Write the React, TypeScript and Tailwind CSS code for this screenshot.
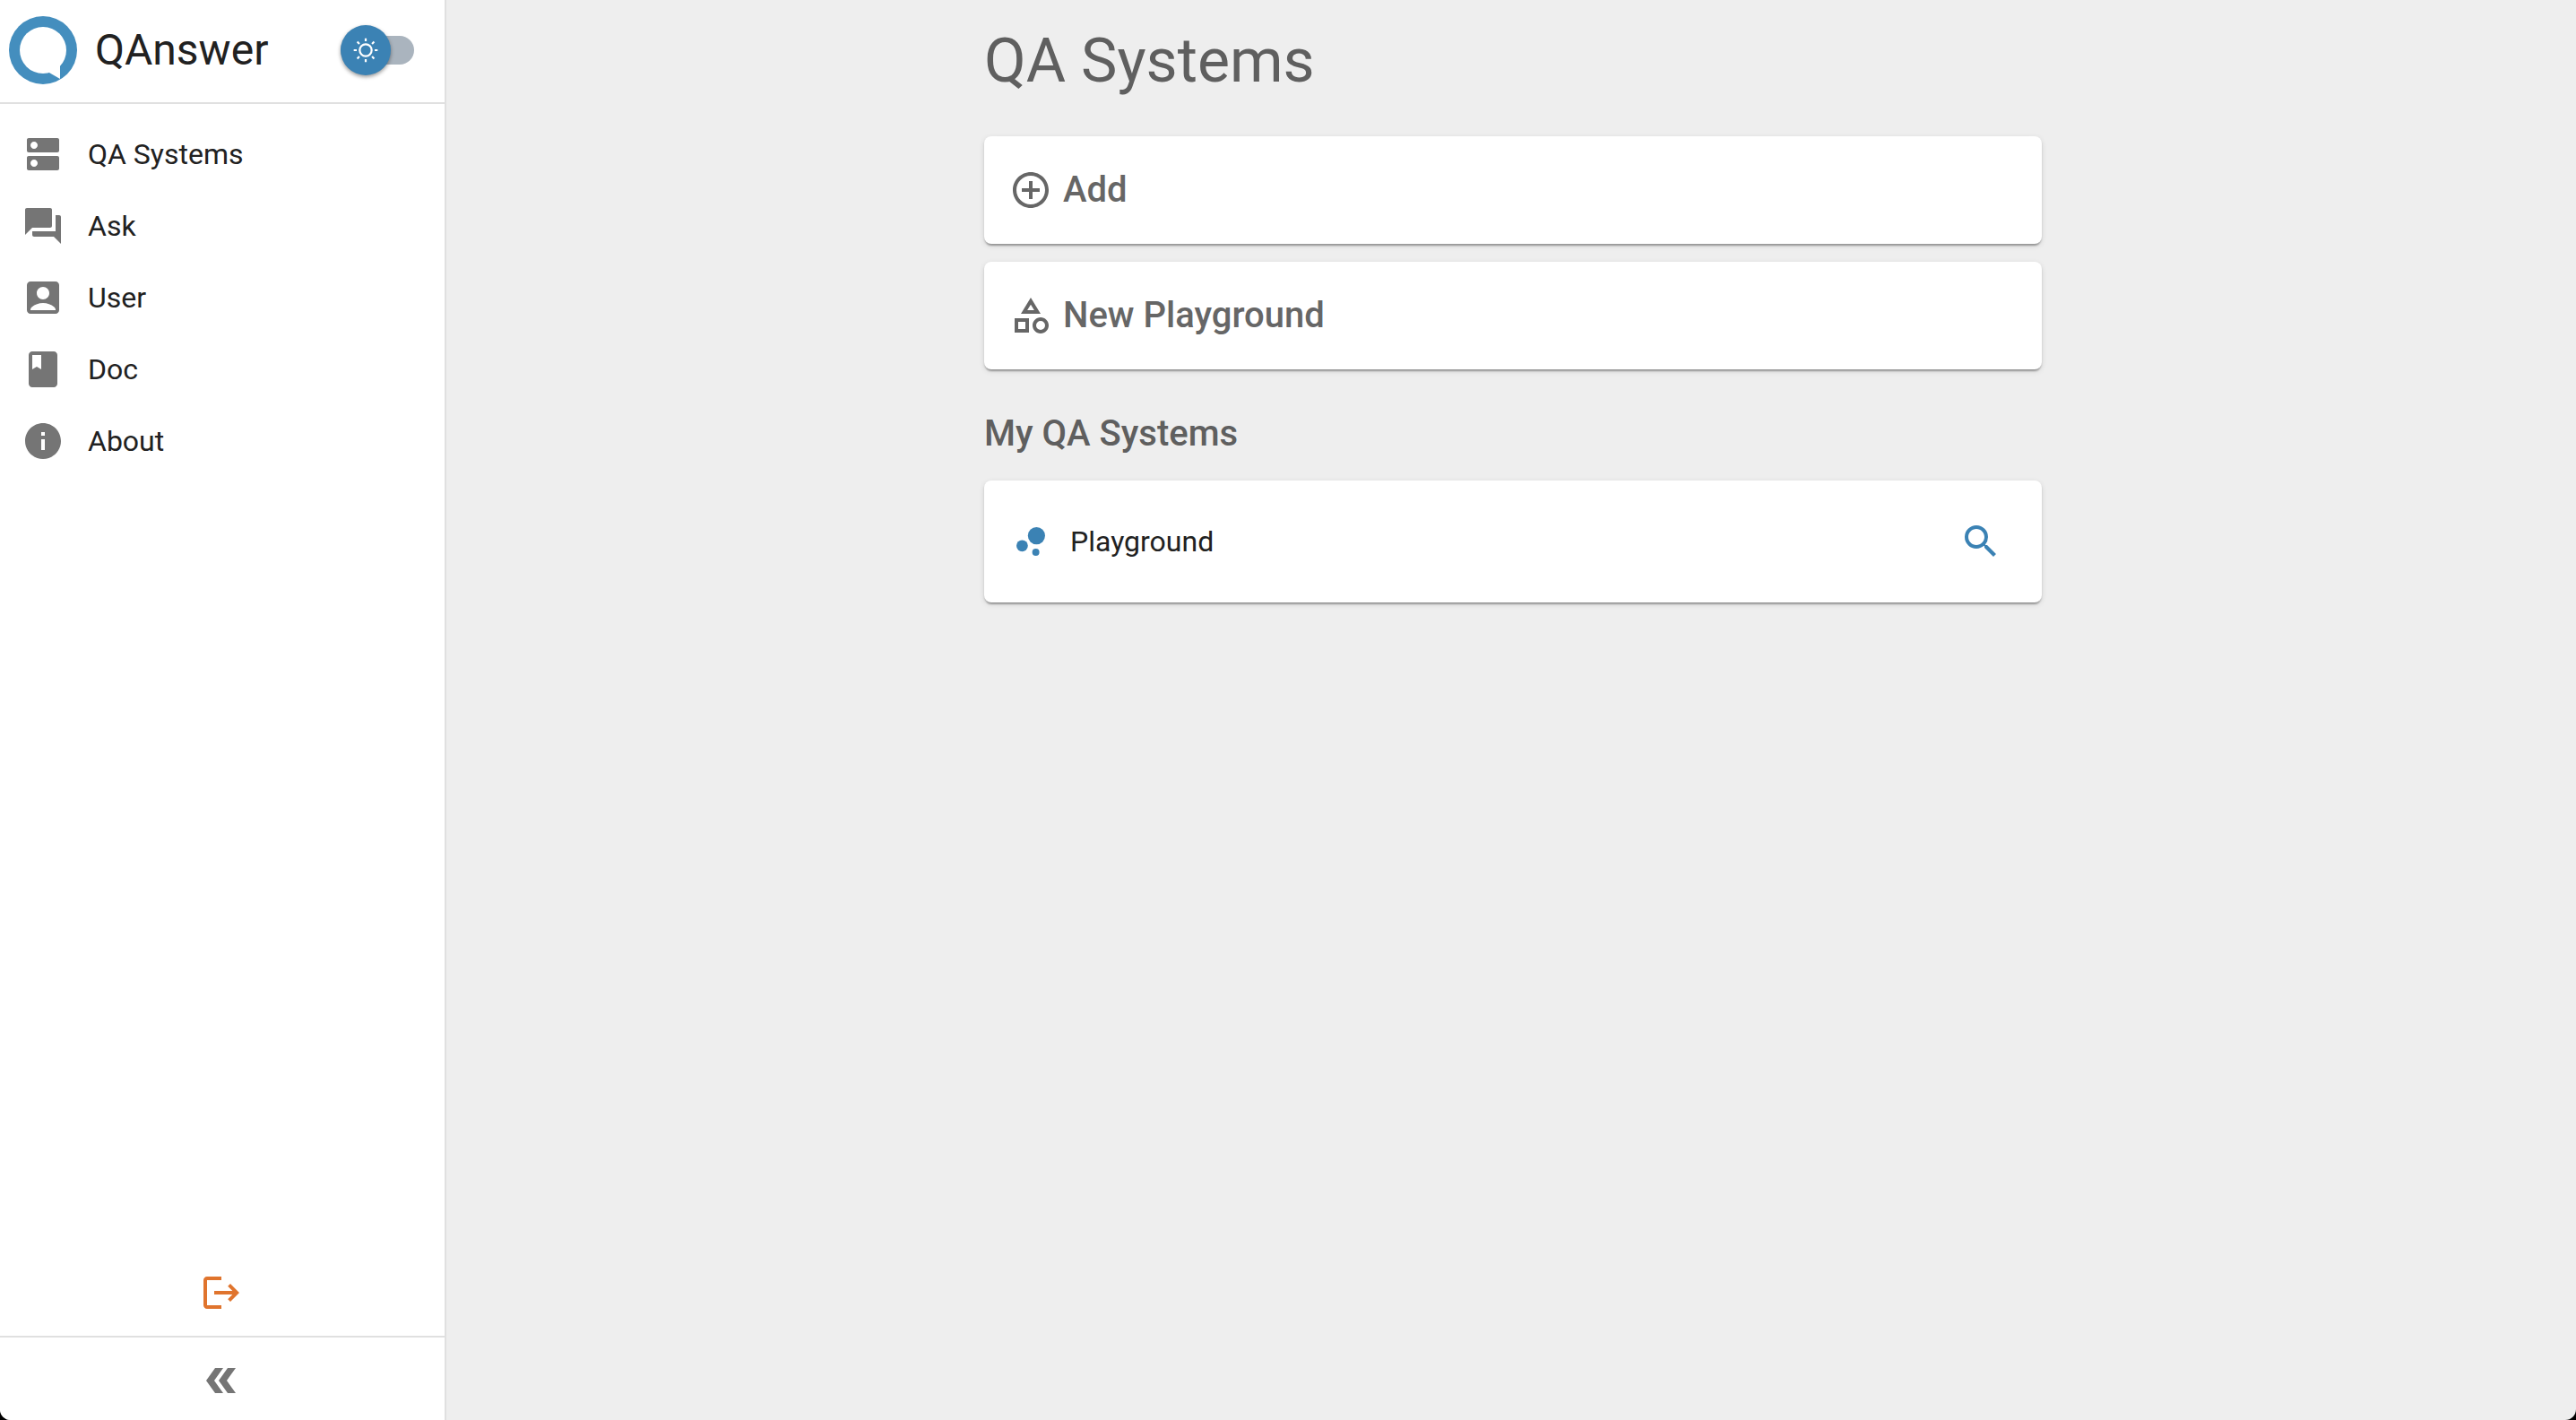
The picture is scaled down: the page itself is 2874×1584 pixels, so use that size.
import React, { useState } from "react";
import type { IconType } from "react-icons";
import {
  MdAddCircleOutline,
  MdAccountBox,
  MdBook,
  MdBubbleChart,
  MdDns,
  MdInfo,
  MdOutlineCategory,
  MdQuestionAnswer,
  MdSearch,
} from "react-icons/md";

const navItems: { label: string; icon: IconType }[] = [
  { label: "QA Systems", icon: MdDns },
  { label: "Ask", icon: MdQuestionAnswer },
  { label: "User", icon: MdAccountBox },
  { label: "Doc", icon: MdBook },
  { label: "About", icon: MdInfo },
];

const actions: { label: string; icon: IconType }[] = [
  { label: "Add", icon: MdAddCircleOutline },
  { label: "New Playground", icon: MdOutlineCategory },
];

const cardClass =
  "w-full rounded-lg bg-white shadow-[0_4px_2px_-2px_rgba(0,0,0,0.2),0_2px_2px_0_rgba(0,0,0,0.14),0_2px_6px_0_rgba(0,0,0,0.12)]";

function Logo() {
  return (
    <svg viewBox="0 0 76 76" className="size-[76px] shrink-0" aria-hidden="true">
      <circle cx="38" cy="38" r="38" fill="#448ebe" />
      <circle cx="38" cy="38" r="26" fill="#fff" />
      <path d="M44 62.5 57 70V55L48 50Z" fill="#fff" />
    </svg>
  );
}

function SunIcon() {
  return (
    <svg viewBox="0 0 20 20" className="size-8" fill="#fff" aria-hidden="true">
      <path d="M9.305 1.667V3.75h1.389V1.667h-1.39zm-4.707 1.95l-.982.982L5.09 6.072l.982-.982-1.473-1.473zm10.802 0L13.927 5.09l.982.982 1.473-1.473-.982-.982zM10 5.139a4.872 4.872 0 00-4.862 4.86A4.872 4.872 0 0010 14.862 4.872 4.872 0 0014.86 10 4.872 4.872 0 0010 5.139zm0 1.389A3.462 3.462 0 0113.471 10a3.462 3.462 0 01-3.473 3.472A3.462 3.462 0 016.527 10 3.462 3.462 0 0110 6.528zM1.665 9.305v1.39h2.083v-1.39H1.666zm14.583 0v1.39h2.084v-1.39h-2.084zM5.09 13.928L3.616 15.4l.982.982 1.473-1.473-.982-.982zm9.82 0l-.982.982 1.473 1.473.982-.982-1.473-1.473zM9.305 16.25v2.083h1.389V16.25h-1.39z" />
    </svg>
  );
}

function ThemeSwitch() {
  const [dark, setDark] = useState(false);
  return (
    <label className="relative flex h-14 w-[82px] cursor-pointer items-center">
      <input
        type="checkbox"
        role="switch"
        aria-label="Dark mode"
        checked={dark}
        onChange={(e) => setDark(e.target.checked)}
        className="peer sr-only"
      />
      <span className="h-8 w-full rounded-full bg-[#aab4be]" />
      <span className="absolute left-0 flex size-14 items-center justify-center rounded-full bg-[#3b82b4] shadow-[0_2px_4px_rgba(0,0,0,0.4)] peer-checked:left-7">
        <SunIcon />
      </span>
    </label>
  );
}

function Sidebar() {
  return (
    <aside className="flex w-[498px] shrink-0 flex-col border-r-2 border-[#e0e0e0] bg-white">
      <header className="flex h-29 items-center border-b-2 border-[#e0e0e0] pr-[34px] pb-0.5 pl-2.5">
        <Logo />
        <span className="ml-5 flex-1 text-5xl">QAnswer</span>
        <ThemeSwitch />
      </header>
      <nav className="flex-1 py-4">
        <ul>
          {navItems.map(({ label, icon: Icon }) => (
            <li key={label}>
              <a href="#" className="flex h-20 items-center gap-[26px] px-6 text-[32px]">
                <Icon className="size-12 text-[#757575]" />
                {label}
              </a>
            </li>
          ))}
        </ul>
      </nav>
      <button
        type="button"
        aria-label="Log out"
        className="flex h-24 items-center justify-center border-b-2 border-[#e0e0e0] pr-0.5 pb-0.5 text-[#e0742d]"
      >
        <svg viewBox="0 0 24 24" className="size-12" fill="currentColor" aria-hidden="true">
          <path d="M17 7l5 5-5 5-1.41-1.41L18.17 13H8v-2h10.17l-2.58-2.59z" />
          <path d="M4 5h8V3H4c-1.1 0-2 .9-2 2v14c0 1.1.9 2 2 2h8v-2H4V5z" />
        </svg>
      </button>
      <button
        type="button"
        aria-label="Collapse sidebar"
        className="flex h-23 items-center justify-center pt-1 pr-1 text-[#757575]"
      >
        <svg viewBox="0 0 33 28" className="h-7 w-[33px]" fill="currentColor" aria-hidden="true">
          <path d="M0 14 10 0h9L9 14l10 14h-9z" />
          <path d="M14 14 24 0h9L23 14l10 14h-9z" />
        </svg>
      </button>
    </aside>
  );
}

export default function App() {
  return (
    <div className="min-h-screen bg-black">
      <div className="flex min-h-screen overflow-hidden rounded-b-xl bg-[#eeeeee] font-['Roboto',sans-serif] text-[#212121]">
        <Sidebar />
        <main className="flex-1 pl-1">
          <div className="mx-auto max-w-[1180px] pt-7">
            <h1 className="text-[68px] leading-20 text-[#5f5f5f]">QA Systems</h1>
            <div className="mt-11 flex flex-col gap-5">
              {actions.map(({ label, icon: Icon }) => (
                <button
                  key={label}
                  type="button"
                  className={`${cardClass} flex h-30 items-center gap-3 px-7 text-[40px] font-medium text-[#666666]`}
                >
                  <Icon className="size-12" />
                  {label}
                </button>
              ))}
            </div>
            <h2 className="mt-10 text-[40px] leading-16 font-medium text-[#5f5f5f]">My QA Systems</h2>
            <div className={`${cardClass} mt-5 flex h-34 items-center pr-11 pl-7`}>
              <MdBubbleChart className="size-12 text-[#3b82b4]" />
              <a href="#" className="ml-5 flex-1 text-[32px]">
                Playground
              </a>
              <button type="button" aria-label="Search Playground" className="text-[#3b82b4]">
                <MdSearch className="size-12" />
              </button>
            </div>
          </div>
        </main>
      </div>
    </div>
  );
}
